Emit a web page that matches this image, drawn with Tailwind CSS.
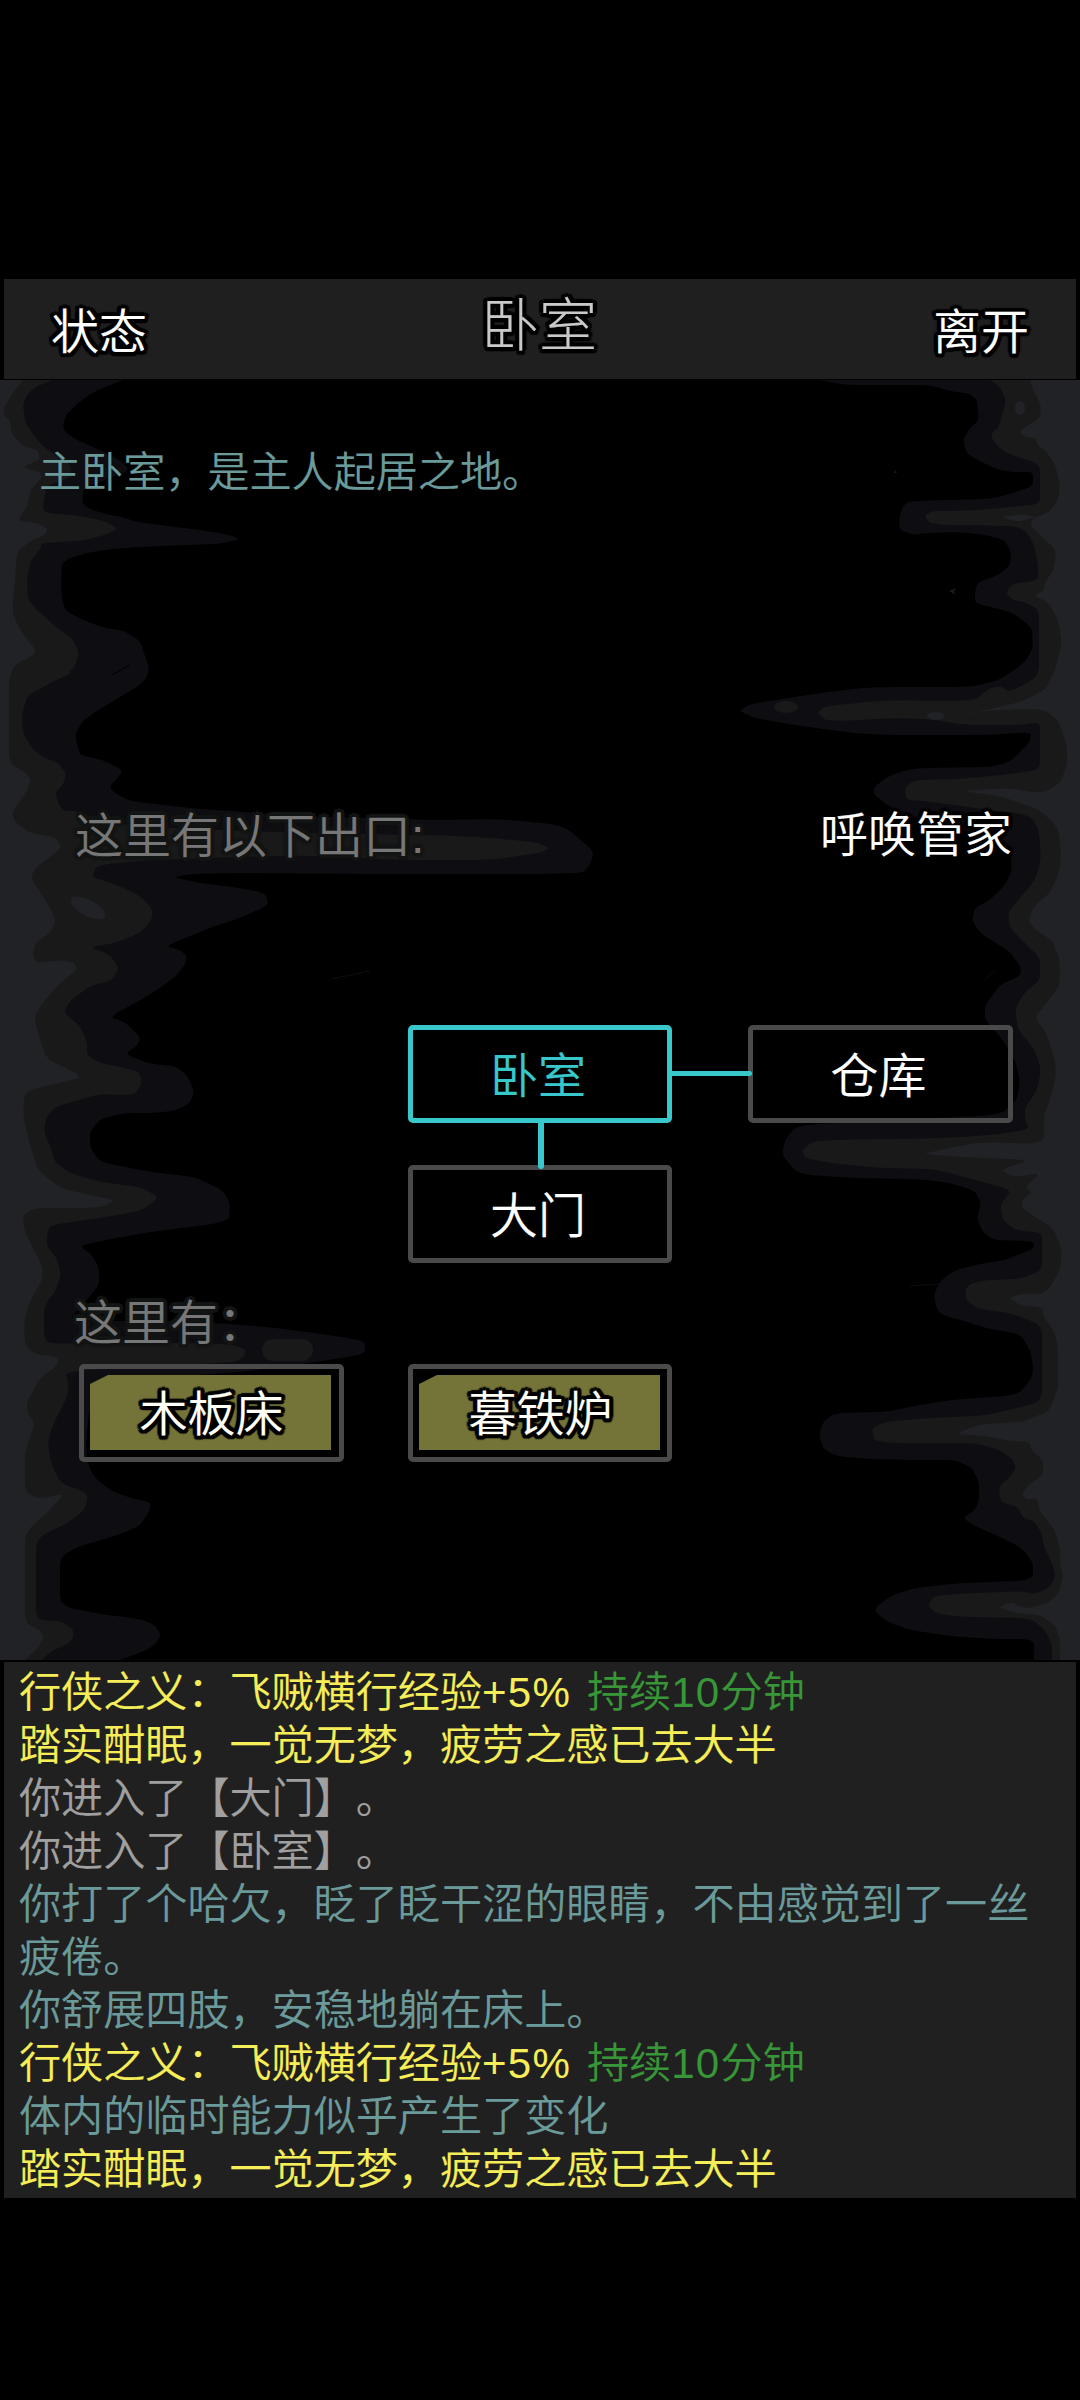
<!DOCTYPE html>
<html lang="zh-CN">
<head>
<meta charset="utf-8">
<title>卧室</title>
<script src="https://cdn.jsdelivr.net/npm/@tailwindcss/browser@4"></script>
</head>
<body class="bg-black">
<main class="flex h-[2400px] w-[1080px] flex-col overflow-hidden bg-black pt-[279px] font-['Liberation_Sans','Noto_Sans_CJK_SC',sans-serif] text-white [font-weight:350] [text-spacing-trim:space-all] [-webkit-text-stroke:0.15px_currentColor]">

  <header class="mx-1 grid h-[100px] shrink-0 grid-cols-3 bg-[#1f1f1f] px-[47px] text-[48px] leading-[100px] [text-shadow:4px_0_1px_#000,-4px_0_1px_#000,0_4px_1px_#000,0_-4px_1px_#000,3px_3px_1px_#000,-3px_3px_1px_#000,3px_-3px_1px_#000,-3px_-3px_1px_#000,2px_4px_1px_#000,-2px_4px_1px_#000,4px_-2px_1px_#000,-4px_-2px_1px_#000]">
    <button class="pt-[4px] text-left [text-shadow:inherit]">状态</button>
    <h1 class="-mt-[3px] pr-[2px] text-center text-[58px] text-[#c9c9c9] [font-weight:300]">卧室</h1>
    <button class="pt-[4px] text-right [text-shadow:inherit]">离开</button>
  </header>

  <section class="relative mt-px h-[1280px] shrink-0">
    <svg id="walls" class="absolute inset-0 h-full w-full" viewBox="0 380 1080 1280"></svg>

    <div class="relative flex h-full flex-col">
      <p class="h-[372px] pt-[66px] pl-[39px] text-[42.1px] leading-[54px] text-[#6b9a9a]">主卧室，是主人起居之地。</p>

      <div class="flex h-[273px] justify-between pt-[54px] pr-[68px] pl-[75px] text-[48px] leading-[60px]">
        <span class="mt-px text-[#777777] [text-shadow:4px_0_1px_#131514,-4px_0_1px_#131514,0_4px_1px_#131514,0_-4px_1px_#131514,3px_3px_1px_#131514,-3px_3px_1px_#131514,3px_-3px_1px_#131514,-3px_-3px_1px_#131514]">这里有以下出口:</span>
        <button class="h-[60px] [text-shadow:4px_0_1px_#000,-4px_0_1px_#000,0_4px_1px_#000,0_-4px_1px_#000,3px_3px_1px_#000,-3px_3px_1px_#000,3px_-3px_1px_#000,-3px_-3px_1px_#000]">呼唤管家</button>
      </div>

      <nav class="relative ml-[408px] grid h-[238px] w-[605px] grid-cols-[264px_265px] content-start justify-between gap-y-[42px] text-[48px] leading-[94px]">
        <div class="h-[98px] rounded-[5px] border-[5px] border-[#38c8cb] pr-[4px] text-center text-[#38c8cb]">卧室</div>
        <div class="h-[98px] rounded-[5px] border-[5px] border-[#4a4a4a] pr-[4px] text-center">仓库</div>
        <div class="h-[98px] rounded-[5px] border-[5px] border-[#4a4a4a] pr-[4px] text-center">大门</div>
        <i class="absolute top-[46px] left-[262px] h-[5px] w-[82px] rounded-full bg-[#38c8cb]"></i>
        <i class="absolute top-[96px] left-[130px] h-[48px] w-[6px] rounded-full bg-[#38c8cb]"></i>
      </nav>

      <p class="mt-[31px] h-[70px] pl-[74px] text-[48px] leading-[60px] text-[#777777] [text-shadow:4px_0_1px_#131514,-4px_0_1px_#131514,0_4px_1px_#131514,0_-4px_1px_#131514,3px_3px_1px_#131514,-3px_3px_1px_#131514,3px_-3px_1px_#131514,-3px_-3px_1px_#131514]">这里有：</p>

      <div class="flex gap-16 pl-[79px] text-[48px] leading-[80px] text-[#fffff8] [text-shadow:4px_0_1px_#000,-4px_0_1px_#000,0_4px_1px_#000,0_-4px_1px_#000,3px_3px_1px_#000,-3px_3px_1px_#000,3px_-3px_1px_#000,-3px_-3px_1px_#000,2px_4px_1px_#000,-2px_4px_1px_#000,4px_-2px_1px_#000,-4px_-2px_1px_#000]">
        <button class="h-[98px] w-[265px] rounded-[5px] border-[5px] border-[#4a4a4a] pt-[6px] pr-[8px] pb-[7px] pl-[6px] [text-shadow:inherit]">
          <span class="block h-[75px] bg-[#747338] pl-[2px] [clip-path:polygon(18px_0,100%_0,100%_100%,0_100%,0_9px)]">木板床</span>
        </button>
        <button class="h-[98px] w-[264px] rounded-[5px] border-[5px] border-[#4a4a4a] pt-[6px] pr-[7px] pb-[7px] pl-[6px] [text-shadow:inherit]">
          <span class="block h-[75px] bg-[#747338] pl-[2px] [clip-path:polygon(18px_0,100%_0,100%_100%,0_100%,0_9px)]">暮铁炉</span>
        </button>
      </div>
    </div>
  </section>

  <section class="mx-1 mt-[2px] h-[536px] shrink-0 bg-[#202020] px-[15px] pt-[4px] text-[42.1px] leading-[53px] text-[#6b9a9a]">
    <p class="text-[#f6ee59]">行侠之义：飞贼横行经验<span class="tracking-[1.2px] [font-weight:400] [word-spacing:3px] [-webkit-text-stroke:0]">+5% </span><span class="text-[#389638]">持续<span class="tracking-[1.3px] [font-weight:400] [-webkit-text-stroke:0]">10</span>分钟</span></p>
    <p class="text-[#f6ee59]">踏实酣眠，一觉无梦，疲劳之感已去大半</p>
    <p class="text-[#a0a0a0]">你进入了【大门】。</p>
    <p class="text-[#a0a0a0]">你进入了【卧室】。</p>
    <p>你打了个哈欠，眨了眨干涩的眼睛，不由感觉到了一丝疲倦。</p>
    <p>你舒展四肢，安稳地躺在床上。</p>
    <p class="text-[#f6ee59]">行侠之义：飞贼横行经验<span class="tracking-[1.2px] [font-weight:400] [word-spacing:3px] [-webkit-text-stroke:0]">+5% </span><span class="text-[#389638]">持续<span class="tracking-[1.3px] [font-weight:400] [-webkit-text-stroke:0]">10</span>分钟</span></p>
    <p>体内的临时能力似乎产生了变化</p>
    <p class="text-[#f6ee59]">踏实酣眠，一觉无梦，疲劳之感已去大半</p>
  </section>
</main>

<script>
// Rock walls: three tones per side, each given as edge points from top to bottom.
const NAVY = '#0e0d12', GREY = '#19191a', SLATE = '#202226';
const walls = [
  [0, NAVY, '123,380 95,391 78,403 67,414 64,420 63,430 75,439 100,450 118,459 130,470 105,480 84,488 82,503 90,509 105,514 122,517 137,522 167,526 200,530 230,535 239,539 230,542 215,544 137,547 105,550 87,553 70,558 62,563 61,585 62,600 66,611 85,621 105,628 125,631 140,641 144,653 149,667 147,677 140,685 115,700 92,714 82,722 75,735 79,750 80,755 103,760 124,771 108,788 127,800 145,803 200,809 300,816 430,820 500,819 563,825 594,851 590,865 582,874 400,874 200,873 172,877 200,883 240,888 265,893 269,905 240,918 215,926 165,946 180,950 187,956 185,965 175,977 150,995 109,1017 125,1022 140,1037 138,1045 125,1054 150,1064 175,1066 188,1076 194,1091 190,1103 175,1111 150,1113 125,1113 100,1119 90,1132 90,1147 100,1162 150,1172 195,1177 222,1190 230,1202 229,1222 150,1232 100,1241 80,1246 92,1255 99,1268 99,1285 85,1302 68,1321 130,1321 200,1322 270,1327 350,1338 365,1342 365,1354 310,1363 240,1372 170,1377 115,1385 90,1405 86,1440 87,1462 95,1478 110,1490 130,1498 150,1502 150,1510 140,1526 115,1536 80,1546 65,1554 60,1561 60,1602 70,1608 100,1614 140,1619 155,1625 161,1635 155,1645 140,1653 120,1660'],
  [0, GREY, '53,380 35,387 27,395 23,405 25,422 35,437 43,446 55,455 71,465 70,478 48,485 44,497 43,513 75,515 105,521 118,529 105,535 80,541 41,543 41,548 30,562 27,580 28,600 40,613 60,630 73,639 79,653 75,666 69,672 72,673 50,683 27,696 22,715 23,733 32,748 43,757 58,763 66,773 64,783 56,792 57,800 63,811 72,810 120,826 300,833 430,835 480,837 535,842 550,848 540,853 490,860 400,860 300,855 150,860 97,865 92,877 115,884 140,896 152,908 152,920 140,933 115,943 90,947 110,955 119,968 112,980 90,986 70,1001 64,1013 80,1026 87,1042 87,1055 100,1063 125,1068 139,1072 142,1083 135,1094 120,1095 100,1094 75,1101 55,1107 46,1118 44,1132 51,1148 55,1162 70,1173 100,1182 140,1187 157,1196 155,1201 140,1211 100,1218 50,1225 47,1235 47,1247 57,1258 61,1275 55,1292 47,1302 44,1310 44,1335 48,1344 130,1342 230,1344 245,1349 245,1356 235,1362 200,1364 65,1371 69,1385 66,1400 55,1420 48,1440 50,1460 60,1483 88,1493 85,1509 70,1522 36,1538 36,1579 36,1620 60,1621 72,1628 74,1635 70,1643 50,1652 42,1660'],
  [0, SLATE, '23,380 13,393 4,408 4,415 10,420 12,435 25,447 38,450 40,460 22,467 40,472 42,478 30,490 28,505 17,521 38,523 48,529 45,535 32,540 17,551 15,580 12,612 20,630 38,653 14,665 9,680 9,720 9,763 25,772 31,780 26,792 12,812 15,822 30,833 55,837 62,847 50,857 35,868 31,878 40,892 50,908 56,920 50,933 35,943 33,957 38,963 60,960 75,963 77,970 60,983 45,1000 34,1016 40,1040 47,1059 84,1077 55,1084 25,1091 23,1115 30,1145 38,1170 60,1188 90,1195 115,1200 100,1208 35,1208 23,1215 24,1230 43,1268 42,1280 28,1305 24,1325 25,1345 35,1354 58,1357 58,1365 40,1378 27,1402 27,1412 35,1424 25,1450 25,1492 40,1499 65,1493 50,1510 30,1528 25,1537 25,1580 25,1623 40,1630 44,1637 38,1648 25,1660'],
  [1080, NAVY, '820,380 845,385 930,385 950,391 970,394 977,400 979,420 970,428 963,440 967,454 980,461 998,470 1015,472 1033,472 1033,486 1010,494 990,499 908,501 902,508 899,520 900,530 914,535 925,533 960,532 985,535 1005,540 1011,553 1010,565 1000,574 977,583 975,593 975,603 1010,612 1020,618 1032,628 1033,648 1025,662 1000,680 970,687 870,687 820,693 750,704 739,711 755,718 800,726 870,735 990,735 1031,732 1030,742 1010,762 990,767 915,768 890,775 874,787 874,795 890,807 930,822 990,836 1010,850 1012,870 1005,885 990,900 975,908 972,920 980,933 1010,952 1021,967 1020,976 1000,985 985,1005 985,1020 1000,1036 1015,1060 1020,1080 1017,1100 1000,1115 900,1120 797,1125 785,1140 782,1155 798,1174 850,1178 920,1179 950,1183 975,1191 981,1203 977,1218 983,1233 995,1240 1030,1241 1034,1243 1033,1249 1005,1260 980,1264 955,1270 940,1281 934,1295 937,1310 943,1315 970,1323 990,1329 1020,1334 1030,1350 1033,1365 1032,1378 1018,1395 950,1400 915,1406 885,1412 835,1413 823,1422 819,1435 823,1448 835,1456 870,1459 920,1460 955,1460 972,1468 979,1482 979,1500 975,1510 963,1518 975,1526 1000,1537 1022,1548 1033,1563 1033,1577 1022,1581 960,1583 915,1588 890,1596 873,1610 888,1622 910,1630 950,1636 990,1639 1034,1639 1034,1660'],
  [1080, GREY, '990,380 1000,387 1006,400 1003,412 998,428 992,432 992,440 1005,453 1040,464 1040,484 1040,504 1010,507 980,510 945,511 932,511 924,516 930,523 945,525 1015,526 1027,532 1034,545 1037,560 1039,576 1035,581 1012,584 1006,593 1012,600 1025,602 1039,610 1039,640 1039,676 1010,692 1000,686 990,688 975,700 945,701 890,700 825,706 817,713 825,720 845,721 890,718 930,719 965,725 1020,725 1040,722 1040,745 1040,770 1000,775 960,779 915,780 905,787 906,800 925,801 960,806 1030,815 1039,830 1041,860 1035,880 1020,898 1008,912 1010,928 1025,943 1040,958 1040,980 1025,992 1015,1008 1018,1030 1035,1050 1041,1070 1037,1090 1025,1108 1025,1120 1029,1129 1000,1134 950,1138 815,1140 802,1150 805,1158 830,1163 880,1168 935,1169 975,1180 1012,1190 1000,1205 1003,1220 1015,1230 1042,1233 1042,1250 1042,1270 1020,1279 985,1280 970,1284 965,1290 966,1300 978,1309 1010,1313 1042,1325 1042,1360 1042,1401 1010,1410 980,1416 925,1418 885,1422 872,1428 874,1440 890,1443 975,1443 1000,1450 1013,1460 1016,1468 1010,1477 1000,1485 999,1495 1003,1503 1018,1507 1022,1517 1035,1522 1042,1535 1044,1548 1053,1565 1055,1577 1050,1587 1035,1594 1020,1591 935,1595 928,1605 935,1613 960,1617 1030,1618 1045,1630 1052,1645 1052,1660'],
  [1080, SLATE, '1030,380 1033,390 1041,405 1040,418 1025,427 1020,432 1025,437 1036,438 1037,445 1045,450 1055,464 1060,485 1058,500 1050,511 1040,516 1018,522 1000,517 1025,514 1034,517 1030,525 1045,540 1056,550 1054,570 1045,582 1044,590 1034,596 1048,602 1058,620 1062,643 1055,670 1045,690 1020,702 990,709 958,717 990,710 1043,709 1058,720 1067,745 1067,765 1060,783 1045,792 1030,792 1010,788 960,791 1000,796 1040,810 1058,828 1061,850 1060,870 1050,893 1035,905 1028,920 1035,930 1052,940 1060,960 1060,985 1045,1005 1035,1017 1047,1035 1055,1060 1056,1075 1050,1100 1044,1115 1044,1144 980,1142 940,1150 922,1154 960,1157 1030,1160 1005,1168 1003,1172 1015,1177 1040,1173 1025,1188 1032,1192 1022,1200 1022,1208 1035,1217 1053,1228 1062,1250 1060,1270 1048,1290 1040,1294 1020,1294 1009,1298 1020,1305 1043,1308 1043,1315 1055,1333 1058,1350 1058,1390 1048,1412 1033,1417 1023,1422 980,1424 955,1434 985,1436 1010,1441 1030,1442 1031,1450 1043,1460 1043,1475 1028,1485 1022,1495 1027,1500 1037,1498 1040,1512 1055,1530 1060,1550 1060,1565 1063,1577 1058,1595 1045,1604 1030,1608 1020,1607 1013,1602 998,1607 1015,1613 1040,1615 1055,1625 1060,1640 1060,1660']
];
// Rounds each corner between neighbouring edge points.
function edge(side, text) {
  const p = text.split(' ').map(s => s.split(',').map(Number));
  let d = `M${side},380 L${p[0]}`;
  for (let i = 1; i < p.length - 1; i++) {
    const a = p[i - 1], b = p[i], c = p[i + 1], k = 0.3;
    d += ` L${b[0] + (a[0] - b[0]) * k},${b[1] + (a[1] - b[1]) * k} Q${b} ${b[0] + (c[0] - b[0]) * k},${b[1] + (c[1] - b[1]) * k}`;
  }
  return d + ` L${p[p.length - 1]} L${side},1660 Z`;
}
document.getElementById('walls').innerHTML =
  walls.map(([side, tone, pts]) => `<path fill="${tone}" d="${edge(side, pts)}"/>`).join('') +
  `<rect x="262" y="1339" width="51" height="22" rx="11" fill="${GREY}"/>
   <ellipse cx="786" cy="707" rx="12" ry="6" fill="${GREY}"/>
   <ellipse cx="88" cy="908" rx="19" ry="8" transform="rotate(28 88 908)" fill="${SLATE}"/>
   <ellipse cx="1020" cy="408" rx="5" ry="7" fill="${SLATE}"/>
   <ellipse cx="936" cy="716" rx="9" ry="4" fill="${SLATE}"/>
   <path d="M112,675 L130,665" stroke="#000"/>
   <path d="M949,591 l7,-3 l-2,4 l2,3z M895,470 l2,3 h-3z" fill="${GREY}"/>
   <path d="M331,979 L370,971 M910,1286 L950,1283 M985,979 L995,970" stroke="${NAVY}"/>`;
</script>
</body>
</html>
